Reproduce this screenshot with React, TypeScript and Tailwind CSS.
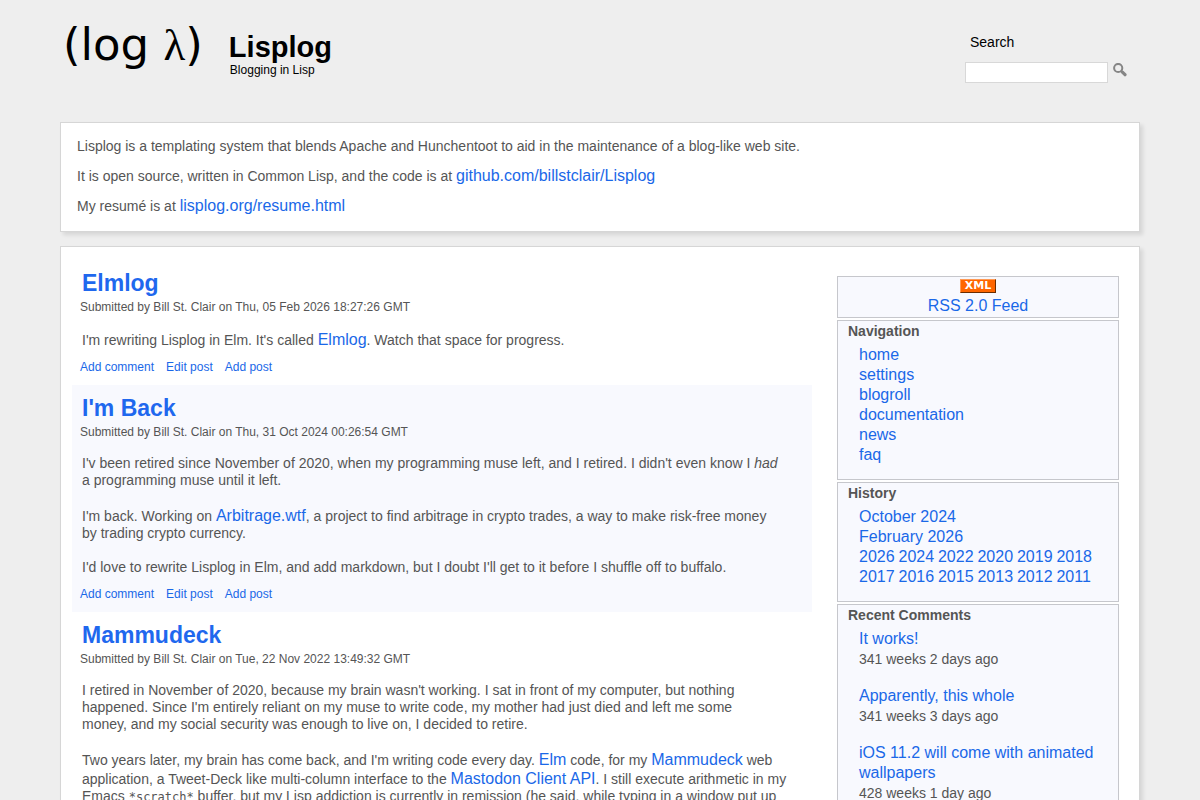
import type { ReactNode } from 'react';

const NAV = ['home', 'settings', 'blogroll', 'documentation', 'news', 'faq'];

const MONTHS = ['October 2024', 'February 2026'];

const YEARS = [2026, 2024, 2022, 2020, 2019, 2018, 2017, 2016, 2015, 2013, 2012, 2011];

const COMMENTS = [
  { title: 'It works!', age: '341 weeks 2 days ago' },
  { title: 'Apparently, this whole', age: '341 weeks 3 days ago' },
  { title: 'iOS 11.2 will come with animated wallpapers', age: '428 weeks 1 day ago' },
];

export default function App() {
  return (
    <div className="min-h-screen bg-[#eeeeee] font-['Liberation_Sans',Arial,sans-serif] text-[14px] leading-[17px] text-[#555555]">
      <div className="mx-auto w-[90%]">
        <Header />
        <Panel className="px-4 pt-[13px] pb-[15px]">
          <div className="space-y-[10px] leading-5">
            <p>
              Lisplog is a templating system that blends Apache and Hunchentoot to aid in the
              maintenance of a blog-like web site.
            </p>
            <p>
              It is open source, written in Common Lisp, and the code is at{' '}
              <Link>github.com/billstclair/Lisplog</Link>
            </p>
            <p>
              My resumé is at <Link>lisplog.org/resume.html</Link>
            </p>
          </div>
        </Panel>

        <Panel className="mt-[14px] flex items-start gap-[25px] pt-[13px] pr-5 pb-6 pl-[11px]">
          <main className="min-w-0 flex-1">
            <Posts />
          </main>
          <Sidebar />
        </Panel>
      </div>
    </div>
  );
}

function Header() {
  return (
    <header className="mb-[39px] flex items-start justify-between pt-[18px] text-black">
      <div className="flex items-start gap-[26px] pl-[3px]">
        <a href="#" className="font-['DejaVu_Sans',Verdana,sans-serif] text-[45px] leading-[54px]">
          (log <span className="font-['Liberation_Serif',serif]">λ</span>)
        </a>
        <div className="mt-[13px]">
          <h1 className="text-[29px] leading-8 font-bold">
            <a href="#">Lisplog</a>
          </h1>
          <p className="pl-px text-[12px] leading-[14px]">Blogging in Lisp</p>
        </div>
      </div>

      <form className="mt-[14px] pr-[13px]" onSubmit={(e) => e.preventDefault()}>
        <label htmlFor="search" className="block pl-[5px] leading-5">
          Search
        </label>
        <div className="mt-[10px] flex items-start gap-[5px]">
          <input
            id="search"
            type="text"
            className="h-[21px] w-[143px] border border-[#d8d8d8] bg-white px-1 text-[12px] outline-none"
          />
          <button type="submit" aria-label="Go" className="pt-px">
            <svg width="14" height="14" viewBox="0 0 14 14" fill="none" stroke="#858585">
              <circle cx="5.2" cy="5" r="4.1" strokeWidth="2" />
              <path d="M8.2 8 L9.6 9.4" strokeWidth="2" />
              <path d="M9.4 9.2 L12 11.7" strokeWidth="3.2" strokeLinecap="round" />
            </svg>
          </button>
        </div>
      </form>
    </header>
  );
}

function Panel({ className = '', children }: { className?: string; children: ReactNode }) {
  return (
    <div
      className={`border border-[#d6d6d6] bg-white shadow-[3px_3px_4px_rgba(0,0,0,0.1)] ${className}`}
    >
      {children}
    </div>
  );
}

function Link({ children }: { children: ReactNode }) {
  return (
    <a href="#" className="text-[16px] leading-[19px] text-[#1a68e8] hover:underline">
      {children}
    </a>
  );
}

/* -------------------- Posts -------------------- */

function Posts() {
  return (
    <>
      <Post title="Elmlog" date="Thu, 05 Feb 2026 18:27:26 GMT">
        <p>
          I'm rewriting Lisplog in Elm. It's called <Link>Elmlog</Link>. Watch that space for
          progress.
        </p>
      </Post>

      <Post title="I'm Back" date="Thu, 31 Oct 2024 00:26:54 GMT" shaded>
        <p>
          I'v been retired since November of 2020, when my programming muse left, and I retired. I
          didn't even know I <em>had</em>
          <br />a programming muse until it left.
        </p>
        <p>
          I'm back. Working on <Link>Arbitrage.wtf</Link>, a project to find arbitrage in crypto
          trades, a way to make risk-free money
          <br />
          by trading crypto currency.
        </p>
        <p>
          I'd love to rewrite Lisplog in Elm, and add markdown, but I doubt I'll get to it before I
          shuffle off to buffalo.
        </p>
      </Post>

      <Post title="Mammudeck" date="Tue, 22 Nov 2022 13:49:32 GMT">
        <p>
          I retired in November of 2020, because my brain wasn't working. I sat in front of my
          computer, but nothing
          <br />
          happened. Since I'm entirely reliant on my muse to write code, my mother had just died and
          left me some
          <br />
          money, and my social security was enough to live on, I decided to retire.
        </p>
        <p>
          Two years later, my brain has come back, and I'm writing code every day. <Link>Elm</Link>{' '}
          code, for my <Link>Mammudeck</Link> web
          <br />
          application, a Tweet-Deck like multi-column interface to the{' '}
          <Link>Mastodon Client API</Link>. I still execute arithmetic in my
          <br />
          Emacs{' '}
          <code className="font-['DejaVu_Sans_Mono',monospace] text-[12px]">*scratch*</code>{' '}
          buffer, but my Lisp addiction is currently in remission (he said, while typing in a window
          put up
        </p>
      </Post>
    </>
  );
}

function Post({
  title,
  date,
  shaded = false,
  children,
}: {
  title: string;
  date: string;
  shaded?: boolean;
  children: ReactNode;
}) {
  return (
    <article className={`px-2 py-[9px] ${shaded ? 'bg-[#f8f9fe]' : ''}`}>
      <h2 className="px-[2px] text-[23px] leading-7 font-bold text-[#1f68ee]">
        <a href="#">{title}</a>
      </h2>
      <p className="mt-[2px] text-[12px] leading-4">Submitted by Bill St. Clair on {date}</p>
      <div className="mt-[15px] space-y-[17px] px-[2px]">{children}</div>
      <div className="mt-[9px] flex gap-3 text-[12px] leading-[18px] text-[#1a68e8]">
        <a href="#">Add comment</a>
        <a href="#">Edit post</a>
        <a href="#">Add post</a>
      </div>
    </article>
  );
}

/* -------------------- Sidebar -------------------- */

function Sidebar() {
  return (
    <aside className="mt-4 w-[282px] shrink-0 space-y-[2px] leading-5">
      <div className="flex flex-col items-center gap-[3px] border border-[#c6c7cc] bg-[#f8f9fe] pt-[2px] pb-px">
        <a
          href="#"
          className="flex h-[14px] w-9 items-center justify-center border border-t-[#ff9a55] border-r-[#6b2d00] border-b-[#6b2d00] border-l-[#ff9a55] bg-[#ff6600] font-['DejaVu_Sans',Verdana,sans-serif] text-[11px] leading-3 font-bold text-white"
        >
          XML
        </a>
        <span>
          <Link>RSS 2.0 Feed</Link>
        </span>
      </div>

      <Block title="Navigation">
        <ul>
          {NAV.map((item) => (
            <li key={item}>
              <Link>{item}</Link>
            </li>
          ))}
        </ul>
      </Block>

      <Block title="History">
        {MONTHS.map((month) => (
          <div key={month}>
            <Link>{month}</Link>
          </div>
        ))}
        <div>
          {YEARS.map((year) => (
            <span key={year}>
              <Link>{year}</Link>{' '}
            </span>
          ))}
        </div>
      </Block>

      <Block title="Recent Comments">
        <ul className="space-y-[17px]">
          {COMMENTS.map((c) => (
            <li key={c.title}>
              <Link>{c.title}</Link>
              <div>{c.age}</div>
            </li>
          ))}
        </ul>
      </Block>
    </aside>
  );
}

function Block({ title, children }: { title: string; children: ReactNode }) {
  return (
    <section className="border border-[#c6c7cc] bg-[#f8f9fe] px-[10px] pb-[14px]">
      <h3 className="font-bold">{title}</h3>
      <div className="mt-1 pl-[11px]">{children}</div>
    </section>
  );
}
